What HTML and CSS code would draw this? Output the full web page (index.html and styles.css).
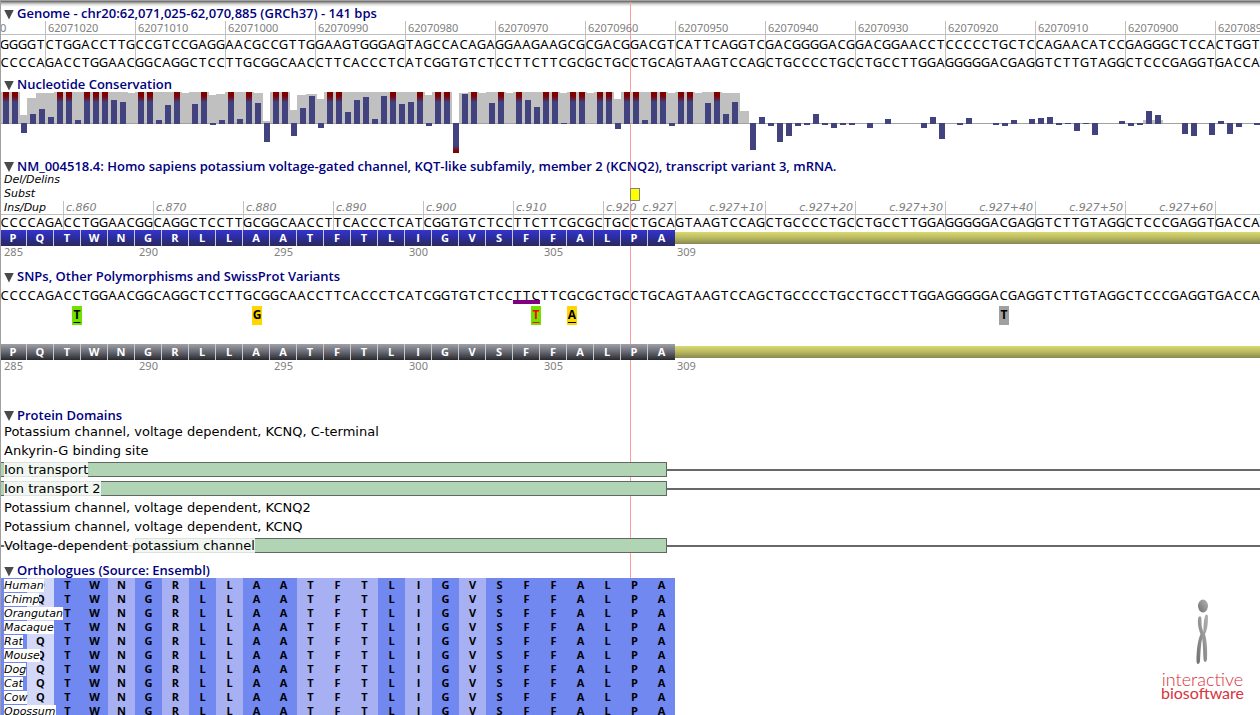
FILE: index.html
```html
<!DOCTYPE html>
<html lang="en">
<head>
<meta charset="utf-8">
<title>Genome viewer</title>
<link rel="stylesheet" href="styles.css">
</head>
<body>
<main class="viewer">
  <div class="cursor-line"></div>

  <section class="track track-genome">
    <h2 class="heading"><button class="toggle" type="button" aria-label="Collapse genome"></button>Genome - chr20:62,071,025-62,070,885 (GRCh37) - 141 bps</h2>
    <div class="ruler" data-ruler="genome">
      <div class="ruler-line"></div>
      <div class="bases bases-forward" data-strand="forward"></div>
      <div class="bases bases-reverse" data-strand="reverse"></div>
    </div>
  </section>

  <section class="track track-conservation">
    <h2 class="heading"><button class="toggle" type="button" aria-label="Collapse conservation"></button>Nucleotide Conservation</h2>
    <svg class="chart" id="chart" viewBox="0 0 1260 64" preserveAspectRatio="none" role="img" aria-label="Conservation scores">
      <defs>
        <linearGradient id="high" x1="0" y1="0" x2="0" y2="1">
          <stop offset="0" stop-color="#800000"/><stop offset="0.12" stop-color="#800000"/><stop offset="0.32" stop-color="#42427f"/>
        </linearGradient>
        <linearGradient id="low" x1="0" y1="0" x2="0" y2="1">
          <stop offset="0.75" stop-color="#42427f"/><stop offset="0.95" stop-color="#800000"/>
        </linearGradient>
      </defs>
    </svg>
  </section>

  <section class="track track-transcript">
    <h2 class="heading"><button class="toggle" type="button" aria-label="Collapse transcript"></button>NM_004518.4: Homo sapiens potassium voltage-gated channel, KQT-like subfamily, member 2 (KCNQ2), transcript variant 3, mRNA.</h2>
    <div class="mutation-row"><span class="row-label">Del/Delins</span></div>
    <div class="mutation-row columns"><span class="row-label">Subst</span><span class="mutation"></span></div>
    <div class="ruler ruler-transcript" data-ruler="transcript">
      <span class="row-label row-label-ruler">Ins/Dup</span>
      <div class="ruler-line"></div>
      <div class="bases bases-forward" data-strand="reverse"></div>
    </div>
    <div class="protein" data-protein></div>
    <div class="columns numbers" data-numbers></div>
  </section>

  <section class="track track-snps">
    <h2 class="heading"><button class="toggle" type="button" aria-label="Collapse variants"></button>SNPs, Other Polymorphisms and SwissProt Variants</h2>
    <div class="bases" data-strand="reverse"></div>
    <div class="columns variants">
      <span class="deletion"></span>
      <span class="variant variant-green at-9"><u>T</u></span>
      <span class="variant variant-gold at-29">G</span>
      <span class="variant variant-green variant-alert at-60"><u>T</u></span>
      <span class="variant variant-gold at-64"><u>A</u></span>
      <span class="variant variant-grey at-112">T</span>
    </div>
    <div class="protein protein-grey" data-protein></div>
    <div class="columns numbers" data-numbers></div>
  </section>

  <section class="track track-domains">
    <h2 class="heading"><button class="toggle" type="button" aria-label="Collapse domains"></button>Protein Domains</h2>
    <div class="domain"><span class="domain-name">Potassium channel, voltage dependent, KCNQ, C-terminal</span></div>
    <div class="domain"><span class="domain-name">Ankyrin-G binding site</span></div>
    <div class="domain domain-hit"><span class="domain-box"></span><span class="domain-name">Ion transport</span></div>
    <div class="domain domain-hit"><span class="domain-box"></span><span class="domain-name">Ion transport 2</span></div>
    <div class="domain"><span class="domain-name">Potassium channel, voltage dependent, KCNQ2</span></div>
    <div class="domain"><span class="domain-name">Potassium channel, voltage dependent, KCNQ</span></div>
    <div class="domain domain-hit"><span class="domain-box domain-box-late"></span><span class="domain-name">Voltage-dependent potassium channel</span></div>
  </section>

  <section class="track track-orthologues">
    <h2 class="heading"><button class="toggle" type="button" aria-label="Collapse orthologues"></button>Orthologues (Source: Ensembl)</h2>
    <table class="orthologues"><tbody id="orthologues"></tbody></table>
  </section>

  <aside class="logo">
    <svg class="logo-mark" viewBox="0 0 14 68" aria-hidden="true">
      <defs>
        <linearGradient id="metal" x1="0" y1="1" x2="1" y2="0">
          <stop offset="0" stop-color="#6e6e70"/><stop offset="1" stop-color="#b5b5b7"/>
        </linearGradient>
      </defs>
      <ellipse cx="8" cy="7" rx="5" ry="6.500" fill="url(#metal)"/>
      <path d="M3.500 18C5.500 16 6.500 18 6.500 21C6.500 27 7 29 8.500 33C8.500 28 8.500 22 10 17C11 15 13 15 13 18C13 26 12 31 10 35C12 42 12.500 52 12 60C11.500 64 9 64 8.500 60C8 52 8 45 7.200 39C5.500 47 5.500 55 5 62C4.500 66 1.500 66 1.500 62C1.500 52 2.500 42 5.500 35C3.500 30 2 23 3.500 18Z" fill="url(#metal)"/>
    </svg>
    <span class="logo-top">interactive</span>
    <span class="logo-bottom">biosoftware</span>
  </aside>
</main>
<script src="script.js"></script>
</body>
</html>
```
FILE: styles.css
```css
* { box-sizing: border-box; }

body {
  margin: 0;
  background: #fff;
  color: #000;
  font-family: "DejaVu Sans", Verdana, sans-serif;
}

.viewer {
  position: relative;
  isolation: isolate;
  height: 100vh;
  overflow: hidden;
  padding-top: 5px;
  background: linear-gradient(#a2a2a2 0 1px, #737373 1px 2px, #9b9b9b 2px 3px, #c0c0bc 3px 4px, #dcdcd8 4px 5px, #eeeeec 5px 6px, #fafafa 6px 7px, #fff 7px);
}

.viewer::before {
  content: "";
  position: absolute;
  inset: 0 auto 0 0;
  width: 1px;
  background: #a0a0a0;
}

.cursor-line {
  position: absolute;
  z-index: -1;
  top: 2px;
  bottom: 0;
  left: 50%;
  width: 1px;
  background: #ff9b9b;
}

.heading {
  display: flex;
  align-items: center;
  gap: 3px;
  height: 16px;
  margin: 0;
  padding-left: 4px;
  color: #000080;
  font: 600 13px/16px "Open Sans", "Noto Sans", sans-serif;
  white-space: nowrap;
}

.toggle {
  width: 10px;
  height: 10px;
  margin-top: 3px;
  padding: 0;
  border: 0;
  background: #4a4a4a;
  clip-path: polygon(0 0, 100% 0, 50% 100%);
}

.columns,
.bases,
.ruler {
  display: grid;
  grid-template-columns: repeat(140, minmax(0, 1fr));
}

.ruler { grid-template-rows: 14px 18px 16px; }

.ruler-line {
  grid-area: 1 / 1 / 2 / -1;
  border-bottom: 1px solid #c0c0c0;
}

.tick {
  grid-row: 1 / -1;
  padding-left: 2px;
  border-left: 1px solid #c0c0c0;
  color: #808080;
  font: 11px/14px "Noto Sans", sans-serif;
  white-space: nowrap;
}

.tick-first { border-left: 0; padding-left: 0; }

.tick-before {
  padding: 0 2px 0 0;
  border-left: 0;
  border-right: 1px solid #c0c0c0;
  text-align: right;
}

.bases {
  height: 18px;
  font: 13px/18px "Noto Sans", sans-serif;
}

.bases span {
  display: flex;
  justify-content: center;
}

.bases-forward { grid-area: 2 / 1 / 3 / -1; }
.bases-reverse { grid-area: 3 / 1 / 4 / -1; }

.track-conservation { margin-top: 7px; }

.chart {
  display: block;
  width: 100%;
  height: 64px;
}

.track-transcript { margin-top: 2px; }
.track-transcript .heading { height: 15px; }

.mutation-row {
  height: 14px;
  align-items: center;
}

.row-label {
  display: block;
  grid-column: 1 / 12;
  padding-left: 4px;
  font: italic 11px/14px "DejaVu Sans", Verdana, sans-serif;
}

.row-label-ruler { grid-row: 1; }

.mutation {
  grid-column: 71;
  width: 10px;
  height: 13px;
  border: 1px solid #808080;
  background: #ff0;
}

.ruler-transcript { grid-template-rows: 14px 15px; }
.ruler-transcript .bases { height: 15px; line-height: 15px; }
.ruler-transcript .tick { font: italic 11px/14px "DejaVu Sans", Verdana, sans-serif; }
.ruler-transcript .tick-before { margin-right: -1px; }

.protein {
  display: grid;
  grid-template-columns: repeat(25, 27fr) 585fr;
  align-items: center;
  height: 16px;
}

.residue {
  height: 16px;
  border-right: 1px solid #c8c8d0;
  background: linear-gradient(#3434d0, #2c2c9c 50%, #2a2a58);
  color: #fff;
  font: 700 11px/16px "Open Sans", sans-serif;
  text-align: center;
}

.residue:nth-child(25) { border-right: 0; }
.protein-grey .residue { background: linear-gradient(#a0a0a8, #686872 50%, #28282f); }

.intron {
  height: 12px;
  background: linear-gradient(#dada70, #b8b860 50%, #888850);
}

.numbers {
  height: 14px;
  color: #808080;
  font: 11px/12px "Noto Sans", sans-serif;
}

.numbers span {
  grid-column-end: span 3;
  text-align: center;
}

.numbers span:last-child {
  padding-left: 2px;
  text-align: left;
}

.track-snps { margin-top: 8px; }
.track-snps .heading { margin-bottom: 2px; }

.variants {
  grid-template-rows: 5px 20px;
  height: 44px;
  margin-top: -4px;
}

.deletion {
  grid-area: 1 / 58 / 2 / 61;
  height: 4px;
  background: #800080;
}

.variant {
  grid-row: 2;
  width: 10px;
  height: 19px;
  margin-top: 1px;
  font: 700 12px/18px "Open Sans", sans-serif;
  text-align: center;
}

.variant u { text-underline-offset: 3px; text-decoration-thickness: 1px; }
.variant-green { background: #72e000; }
.variant-gold { background: #ffd700; }
.variant-grey { background: #a0a0a0; }
.variant-alert { color: #f00; }
.at-9 { grid-column: 9; }
.at-29 { grid-column: 29; }
.at-60 { grid-column: 60; }
.at-64 { grid-column: 64; }
.at-112 { grid-column: 112; }

.track-domains { margin-top: 33px; }
.track-domains .heading { height: 15px; }

.domain {
  display: grid;
  grid-template-columns: 135fr 532fr 593fr;
  align-items: center;
  height: 19px;
}

.domain-name {
  grid-area: 1 / 1 / 2 / 3;
  justify-self: start;
  margin-left: 4px;
  font-size: 13px;
  line-height: 15px;
  white-space: nowrap;
}

.domain-hit::before,
.domain-hit::after {
  content: "";
  grid-row: 1;
  height: 2px;
  background: #666a66;
}

.domain-hit::before { grid-column: 1; }
.domain-hit::after { grid-column: 3; }
.domain-hit .domain-name { background: rgba(255, 255, 255, 0.8); }

.domain-box {
  grid-area: 1 / 1 / 2 / 3;
  height: 15px;
  border: 1px solid #60685f;
  background: #b0d4b4;
}

.domain-box-late { grid-column: 2; }

.track-orthologues { margin-top: 7px; }

.orthologues {
  width: calc(100% * 75 / 140);
  border-collapse: collapse;
  table-layout: fixed;
  background: #7088f0;
}

.orthologues td,
.orthologues th {
  height: 14px;
  padding: 0;
  font: 700 11px/14px "Open Sans", sans-serif;
  text-align: center;
}

.orthologues th { text-align: left; white-space: nowrap; }

.species {
  position: relative;
  display: inline-block;
  height: 13px;
  margin-left: 4px;
  background: #fff;
  font: italic 11px/13px "DejaVu Sans", Verdana, sans-serif;
}

.orthologues .light { background: #a8b0f4; }
.orthologues .pale { background: #d4d8f8; }

.logo {
  position: absolute;
  right: 16px;
  bottom: 15px;
  display: flex;
  flex-direction: column;
  align-items: center;
  color: #d8323c;
  font: 16px/14px Lato, sans-serif;
}

.logo-top { font-size: 18px; font-weight: 300; }

.logo-mark {
  width: 14px;
  height: 68px;
  margin-bottom: 5px;
}
```
FILE: script.js
```js
const forward = "GGGGTCTGGACCTTGCCGTCCGAGGAACGCCGTTGGAAGTGGGAGTAGCCACAGAGGAAGAAGCGCGACGGACGTCATTCAGGTCGACGGGGACGGACGGAACCTCCCCCTGCTCCAGAACATCCGAGGGCTCCACTGGT";
const pair = { A: "T", T: "A", C: "G", G: "C" };
const reverse = [...forward].map((b) => pair[b]).join("");
const protein = "PQTWNGRLLAATFTLIGVSFFALPA";

function add(parent, tag, className, text) {
  const el = document.createElement(tag);
  if (className) el.className = className;
  if (text) el.textContent = text;
  parent.appendChild(el);
  return el;
}

document.querySelectorAll("[data-strand]").forEach((row) => {
  const seq = row.dataset.strand === "forward" ? forward : reverse;
  for (const base of seq) add(row, "span", "", base);
});

function addTick(ruler, start, span, text, className) {
  const tick = document.createElement("div");
  tick.className = className;
  tick.textContent = text;
  tick.style.gridColumn = `${start} / span ${span}`;
  ruler.prepend(tick);
}

const genome = document.querySelector('[data-ruler="genome"]');
addTick(genome, 1, 5, "0", "tick tick-first");
for (let i = 0; i < 14; i++) {
  addTick(genome, 6 + i * 10, i === 13 ? 5 : 10, String(62071020 - i * 10), "tick");
}

const transcript = document.querySelector('[data-ruler="transcript"]');
for (let i = 0; i < 7; i++) addTick(transcript, 8 + i * 10, i === 6 ? 4 : 10, `c.${860 + i * 10}`, "tick");
addTick(transcript, 72, 4, "c.927", "tick tick-before");
for (let i = 1; i < 7; i++) addTick(transcript, 66 + i * 10, 10, `c.927+${i * 10}`, "tick tick-before");

document.querySelectorAll("[data-protein]").forEach((row) => {
  for (const aa of protein) add(row, "span", "residue", aa);
  add(row, "span", "intron");
});

document.querySelectorAll("[data-numbers]").forEach((row) => {
  [[1, 285], [16, 290], [31, 295], [46, 300], [61, 305], [76, 309]].forEach(([col, n]) => {
    add(row, "span", "", String(n)).style.gridColumnStart = col;
  });
});

const scores = [32,32,-10,10,15,7,32,32,4,32,32,32,24,22,0,32,32,4,19,32,0,20,32,-2,4,32,5,32,21,-19,
  32,32,-13,16,28,-5,32,32,12,24,27,5,28,32,20,22,32,-3,32,32,-30,30,32,0,21,32,0,32,24,17,
  32,32,-1,32,32,0,32,32,-6,32,32,4,32,32,-3,32,32,0,21,32,10,22,0,-27,7,-3,-19,-13,-3,-2,
  10,-2,-5,-2,-2,0,-5,0,5,0,0,0,-5,7,-16,0,-2,6,0,0,-2,-3,4,0,5,6,7,-2,-1,-8,
  -1,-12,0,0,3,-3,-2,13,9,0,0,-11,-13,0,-12,3,-11,-4,0,-2];
const coverage = new Array(140).fill(32, 0, 82).fill(0, 82);
Object.entries({ 2: 9, 3: 26, 4: 31, 5: 31, 14: 31, 20: 31, 23: 29, 24: 30, 28: 31, 29: 3, 32: 14, 33: 29,
  34: 30, 35: 25, 47: 29, 50: 0, 51: 31, 53: 31, 56: 31, 62: 31, 65: 31, 68: 25, 74: 31, 77: 31, 80: 31,
  81: 31, 82: 13, 127: 4, 128: 4 }).forEach(([i, h]) => { coverage[i] = h; });

const chart = document.getElementById("chart");
function rect(x, y, width, height, fill) {
  const r = document.createElementNS("http://www.w3.org/2000/svg", "rect");
  Object.entries({ x, y, width, height, fill }).forEach(([k, v]) => r.setAttribute(k, v));
  chart.appendChild(r);
}
coverage.forEach((h, i) => { if (h) rect(i * 9, 32 - h, 11, h, "#c0c0c0"); });
rect(0, 31, 1260, 1, "#a0a4a0");
scores.forEach((s, i) => {
  if (s > 0) rect(i * 9 + 3, 32 - s, 6, s, s === 32 ? "url(#high)" : "#42427f");
  if (s < 0) rect(i * 9 + 3, 31, 6, -s, s === -30 ? "url(#low)" : "#42427f");
});

const shades = ["", "pale", "", "", "light", "", "light", "", "light", "", "", "light", "light", "light", "", "light",
  "", "light", "", "", "", "", "", "", ""];
const body = document.getElementById("orthologues");
["Human", "Chimp", "Orangutan", "Macaque", "Rat", "Mouse", "Dog", "Cat", "Cow", "Opossum"].forEach((name) => {
  const row = add(body, "tr");
  const head = add(row, "th");
  head.scope = "row";
  add(head, "span", "species", name);
  [...protein].slice(1).forEach((aa, i) => add(row, "td", shades[i + 1], aa));
});
```
